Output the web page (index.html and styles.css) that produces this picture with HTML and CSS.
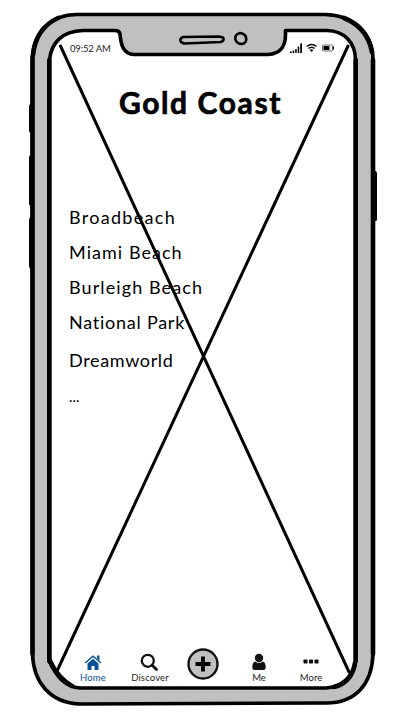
FILE: index.html
```html
<!DOCTYPE html>
<html lang="en">
<head>
<meta charset="utf-8">
<title>Gold Coast</title>
<link rel="stylesheet" href="styles.css">
</head>
<body>
<main class="phone">
  <svg class="frame" viewBox="0 0 415 727" aria-hidden="true">
    <path class="button" d="M30 104h4v29h-4l-1-2v-25zM30 155h4v51h-4l-1-2v-47zM30 217h4v52h-4l-1-3v-46zM373 171h3l1 2v47l-1 1h-3z"/>
    <path class="metal" fill-rule="evenodd" d="M32.5 58C33 33 51 14.500 77 14.500H325C353 15 373 33 373 60V654C372 684 356 703 326 703L80 704C50 703 33 682 32.500 653ZM49.500 60C51 43 62 31 83 30.500H115Q119.500 30.500 120 34C121 45 123 54 134 54.500H268C281 54 285.500 45 285.500 35V30.500H327C344 31 355.500 42 355.500 60V661C354 676 342 687 326 688H80C65 687 57 677 49.500 662Z"/>
    <path class="side" d="M32.500 57V654M49.300 60V661M355.700 60V661M373 60V654"/>
    <path class="corner" d="M33 55C35 36 45 24 58 18M344 18C359 24 369 36 372 52M50 661C55 672 63 681 72 686M334 687C346 684 353 675 355 663"/>
    <path class="speaker" d="M183 37Q179 39 181 42L184 43.500L221 42Q225 40 223 37.500L219 36.500Z"/>
    <path class="camera" d="M240 33C232 35 235 44 242 44C248 43 248 34 240 33Z"/>
  </svg>
  <header class="status">
    <span class="clock">09:52 AM</span>
    <svg class="indicators" viewBox="0 0 46 14" aria-hidden="true">
      <path d="M0 10.500h1.700v1.500H0zM2.700 9.500h1.500V12H2.700zM5.200 8h1.500v4H5.200zM7.700 5.500h1.500V12H7.700zM10.200 2.500H12V12h-1.800z"/>
      <path class="wave" d="M16.600 5.500Q21.500 1.500 26.400 5.500M18.400 7.600Q21.500 5 24.600 7.600M20 9.400Q21.500 8.300 23 9.400"/>
      <circle cx="21.500" cy="10" r=".8"/>
      <rect class="cell" x="32.500" y="4" width="10" height="6" rx="1"/>
      <path d="M33.500 5h6v4h-6zM43 5.500h1v3h-1z"/>
    </svg>
  </header>
  <h1 class="title">Gold Coast</h1>
  <ul class="places">
    <li class="broadbeach">Broadbeach</li>
    <li class="miami">Miami Beach</li>
    <li class="burleigh">Burleigh Beach</li>
    <li class="park">National Park</li>
    <li class="dreamworld">Dreamworld</li>
    <li class="rest">...</li>
  </ul>
  <nav class="tabs">
    <a class="tab active"><svg viewBox="0 0 18 18"><path d="M9 5.800L14.500 10.500V17h-4v-4h-3v4h-4v-6.500z"/><path class="roof" d="M1 10L9 3.200L17 10"/><path d="M13 2.500h2.500v5L13 5.500z"/></svg><span>Home</span></a>
    <a class="tab discover"><svg viewBox="0 0 18 18"><circle class="lens" cx="7.800" cy="7.800" r="6"/><path class="lens handle" d="M12.200 12.200L16.500 16.500"/></svg><span>Discover</span></a>
    <a class="tab add"><svg viewBox="0 0 32 32"><circle class="disc" cx="16" cy="16" r="14.500"/><path class="plus" d="M16 8.500v15M8.500 16h15"/></svg></a>
    <a class="tab me"><svg viewBox="0 0 18 18"><circle cx="9" cy="5" r="4.200"/><path d="M5.200 8.500Q9 11.500 12.800 8.500C15 9 15.800 11.500 15.700 14.500Q15.500 17 13.500 17h-9Q2.500 17 2.300 14.500C2.300 11.500 3 9 5.200 8.500Z"/></svg><span>Me</span></a>
    <a class="tab more"><svg viewBox="0 0 18 18"><rect x="1.500" y="6.500" width="4" height="4" rx=".7"/><rect x="7" y="6.500" width="4" height="4" rx=".7"/><rect x="12.500" y="6.500" width="4" height="4" rx=".7"/></svg><span>More</span></a>
  </nav>
  <svg class="cross" viewBox="0 0 415 727" aria-hidden="true"><path d="M60.500 46L349 672M348 46L57 671"/></svg>
</main>
</body>
</html>
```
FILE: styles.css
```css
* { box-sizing: border-box; }
body { margin: 0; background: #fff; color: #000; font-family: Lato, "Open Sans", sans-serif; }
.phone { position: relative; width: 415px; height: 727px; overflow: hidden; padding: 41px 79px 0 70px; }
.frame, .cross { position: absolute; left: 0; top: 0; width: 415px; height: 727px; pointer-events: none; }
.frame { z-index: -1; }
.metal { fill: #c0c0c0; stroke: #000; stroke-width: 3.6; stroke-linejoin: round; }
.side, .corner { fill: none; stroke: #000; stroke-width: 4.6; stroke-linecap: round; }
.speaker, .camera { fill: #c0c0c0; stroke: #000; stroke-width: 2.6; stroke-linejoin: round; }
.cross path { fill: none; stroke: #000; stroke-width: 3; stroke-linecap: round; }
.status { display: flex; justify-content: space-between; height: 14px; font-size: 9.5px; line-height: 15px; }
.clock { white-space: nowrap; letter-spacing: -.15px; color: #222; }
.indicators { width: 46px; height: 14px; }
.wave { fill: none; stroke: #000; stroke-width: 1.3; }
.cell { fill: #fff; stroke: #444; stroke-width: .8; }
.title { margin: 27px 0 0 49px; font-size: 30px; line-height: 40px; font-weight: 700; -webkit-text-stroke: .7px #000; white-space: nowrap; letter-spacing: 1.6px; }
.places { list-style: none; margin: 78px 0 0; padding: 0; font-size: 18px; line-height: 35px; white-space: nowrap; }
.places li { margin-left: -1px; }
.broadbeach { letter-spacing: 1.3px; }
.miami { letter-spacing: 1.05px; }
.burleigh { letter-spacing: 1.1px; }
.park { letter-spacing: .75px; }
.places .dreamworld { letter-spacing: .65px; margin-top: 3px; }
.places .rest { font-size: 15px; line-height: 37px; }
.tabs { display: grid; grid-template-columns: 58px 56px 49px 64px 40px; margin: 238px 0 0 -6px; height: 40px; }
.tab { display: flex; flex-direction: column; align-items: center; font-size: 9.5px; line-height: 12px; color: #222; }
.tab svg { width: 18px; height: 18px; fill: #111; flex: none; }
.tab span { margin-top: 1px; }
.tabs .active { color: #0b5394; }
.active svg { fill: #0b5394; }
.active span { letter-spacing: .2px; }
.discover span { letter-spacing: .15px; }
.roof { fill: none; stroke: #0b5394; stroke-width: 1.5; }
.lens { fill: none; stroke: #111; stroke-width: 2.3; }
.discover svg { transform: translateX(-1px); }
.handle { stroke-width: 2.8; stroke-linecap: round; }
.add svg { width: 32px; height: 32px; margin-top: -5px; }
.disc { fill: #c0c0c0; stroke: #111; stroke-width: 2.4; }
.plus { fill: none; stroke: #000; stroke-width: 3.8; }
```
